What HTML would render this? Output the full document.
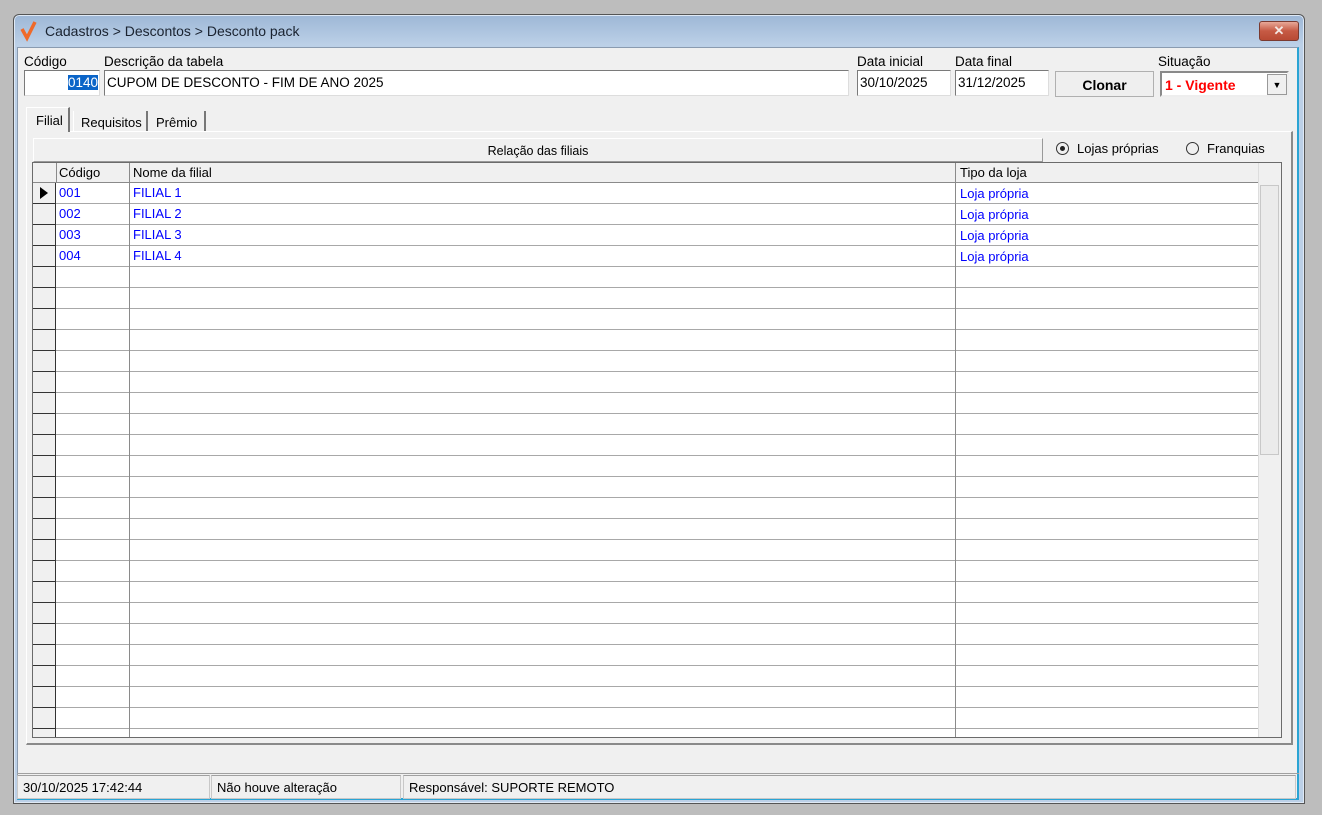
<!DOCTYPE html><html><head><meta charset="utf-8"><style>
*{box-sizing:border-box;margin:0;padding:0}
body{width:1322px;height:815px;background:#bdbdbd;font-family:"Liberation Sans",sans-serif;font-size:13px;color:#000;position:relative;overflow:hidden}
.a{position:absolute}
.win{left:13px;top:14px;width:1292px;height:790px;border:1px solid #555;border-radius:6px 6px 0 0;background:linear-gradient(#9db7d6,#bcd0e7 30px);box-shadow:inset 0 0 0 1px #dfe9f5}
.client{left:17px;top:47px;width:1282px;height:753px;background:#f0f0f0;border:1px solid #8a9bb0;border-right:2px solid #2aa4d4;border-bottom:2px solid #2aa4d4}
.inp{background:#fff;border:1px solid #7a7a7a;border-right-color:#ddd;border-bottom-color:#ddd;height:26px;line-height:24px;padding-left:2px;font-size:13.5px}
.lbl{font-size:13.5px}
.grid{left:32px;top:162px;width:1250px;height:576px;border:1px solid #6b6b6b;background:#fff}
.rows{left:0;top:20px;width:1225px;height:554px;background:repeating-linear-gradient(to bottom,#fff 0,#fff 20px,#a8a8a8 20px,#a8a8a8 21px)}
.ind{left:0;top:20px;width:23px;height:554px;background:repeating-linear-gradient(to bottom,#f0f0f0 0,#f0f0f0 20px,#333 20px,#333 21px);border-right:1px solid #333}
.vl{top:0;width:1px;height:574px;background:#8a8a8a}
.hd{top:0;height:20px;background:#f0f0f0;border-bottom:1px solid #8a8a8a;left:0;width:1225px}
.cell{font-size:13px;color:#0000ff;height:21px;line-height:20px}
.st{top:775px;height:24px;border:1px solid #c8c8c8;border-top-color:#a0a0a0;line-height:24px;padding-left:5px;font-size:13px}
</style></head><body>
<div class="a win"></div>
<svg class="a" style="left:20px;top:20px" width="20" height="22" viewBox="0 0 20 22"><path d="M2 9 L7 18 L15 2" stroke="#ef6a2a" stroke-width="3.5" fill="none"/></svg>
<div class="a" style="left:45px;top:23px;font-size:14px;color:#1a2330">Cadastros &gt; Descontos &gt; Desconto pack</div>
<div class="a" style="left:1259px;top:21px;width:40px;height:20px;border:1px solid #7a3a30;border-radius:3px;background:linear-gradient(#e8a898,#c65a44 50%,#b84a34);color:#f4e8e4;text-align:center;font-weight:bold;font-size:13px;line-height:18px">✕</div>
<div class="a client"></div>
<div class="a lbl" style="left:24px;top:54px">Código</div>
<div class="a lbl" style="left:104px;top:54px">Descrição da tabela</div>
<div class="a lbl" style="left:857px;top:54px">Data inicial</div>
<div class="a lbl" style="left:955px;top:54px">Data final</div>
<div class="a lbl" style="left:1158px;top:54px">Situação</div>
<div class="a inp" style="left:24px;top:70px;width:76px;text-align:right;padding-right:1px"><span style="background:#0a64c8;color:#fff">0140</span></div>
<div class="a inp" style="left:104px;top:70px;width:745px">CUPOM DE DESCONTO - FIM DE ANO 2025</div>
<div class="a inp" style="left:857px;top:70px;width:94px">30/10/2025</div>
<div class="a inp" style="left:955px;top:70px;width:94px">31/12/2025</div>
<div class="a" style="left:1055px;top:71px;width:99px;height:26px;border:1px solid #b0b0b0;background:#efefef;font-weight:bold;text-align:center;line-height:26px;font-size:14px">Clonar</div>
<div class="a" style="left:1160px;top:71px;width:129px;height:26px;border:2px solid #8a8a8a;border-right-color:#eee;border-bottom-color:#eee;background:#fff;color:#ff0000;font-weight:bold;font-size:14px;line-height:24px;padding-left:3px">1 - Vigente</div>
<div class="a" style="left:1267px;top:74px;width:20px;height:21px;background:#f0f0f0;border:1px solid #999;font-size:9px;text-align:center;line-height:20px">▼</div>
<div class="a" style="left:26px;top:131px;width:1267px;height:614px;border:1px solid #fff;border-right:2px solid #8a8a8a;border-bottom:2px solid #8a8a8a"></div>
<div class="a" style="left:26px;top:107px;width:44px;height:25px;border:1px solid #fff;border-right:2px solid #777;border-bottom:none;background:#f0f0f0;padding:5px 0 0 9px">Filial</div>
<div class="a" style="left:73px;top:111px;width:75px;height:20px;border-left:1px solid #fff;border-right:2px solid #777;padding:4px 0 0 7px">Requisitos</div>
<div class="a" style="left:150px;top:111px;width:56px;height:20px;border-right:2px solid #777;padding:4px 0 0 6px">Prêmio</div>
<div class="a" style="left:33px;top:138px;width:1010px;height:24px;border:1px solid #fff;border-right-color:#999;border-bottom-color:#999;text-align:center;line-height:24px;font-size:12.5px">Relação das filiais</div>
<div class="a" style="left:1056px;top:142px;width:13px;height:13px;border:1px solid #333;border-radius:50%"></div>
<div class="a" style="left:1060px;top:146px;width:5px;height:5px;background:#222;border-radius:50%"></div>
<div class="a" style="left:1077px;top:141px">Lojas próprias</div>
<div class="a" style="left:1186px;top:142px;width:13px;height:13px;border:1px solid #333;border-radius:50%"></div>
<div class="a" style="left:1207px;top:141px">Franquias</div>
<div class="a grid">
 <div class="a hd"></div>
 <div class="a rows"></div>
 <div class="a ind"></div>
 <div class="a" style="left:23px;top:0;width:1px;height:20px;background:#8a8a8a"></div>
 <div class="a vl" style="left:96px"></div>
 <div class="a vl" style="left:922px"></div>
 <div class="a" style="left:1225px;top:0;width:23px;height:574px;background:#f0f0f0;border-left:1px solid #ddd"></div>
 <div class="a" style="left:1227px;top:22px;width:19px;height:270px;background:#ebebeb;border:1px solid #c8c8c8"></div>
 <div class="a" style="left:26px;top:2px;font-size:13px">Código</div>
 <div class="a" style="left:100px;top:2px;font-size:13px">Nome da filial</div>
 <div class="a" style="left:927px;top:2px;font-size:13px">Tipo da loja</div>
 <div class="a" style="left:7px;top:24px;width:0;height:0;border-left:8px solid #000;border-top:6px solid transparent;border-bottom:6px solid transparent"></div>
 <div class="a" style="left:26px;top:20px">
  <div class="cell">001</div><div class="cell">002</div><div class="cell">003</div><div class="cell">004</div></div>
 <div class="a" style="left:100px;top:20px">
  <div class="cell">FILIAL 1</div><div class="cell">FILIAL 2</div><div class="cell">FILIAL 3</div><div class="cell">FILIAL 4</div></div>
 <div class="a" style="left:927px;top:21px">
  <div class="cell">Loja própria</div><div class="cell">Loja própria</div><div class="cell">Loja própria</div><div class="cell">Loja própria</div></div>
</div>
<div class="a" style="left:17px;top:773px;width:1282px;height:1px;background:#a0a0a0"></div>
<div class="a st" style="left:17px;width:193px">30/10/2025 17:42:44</div>
<div class="a st" style="left:211px;width:190px">Não houve alteração</div>
<div class="a st" style="left:403px;width:893px">Responsável: SUPORTE REMOTO</div>
</body></html>
